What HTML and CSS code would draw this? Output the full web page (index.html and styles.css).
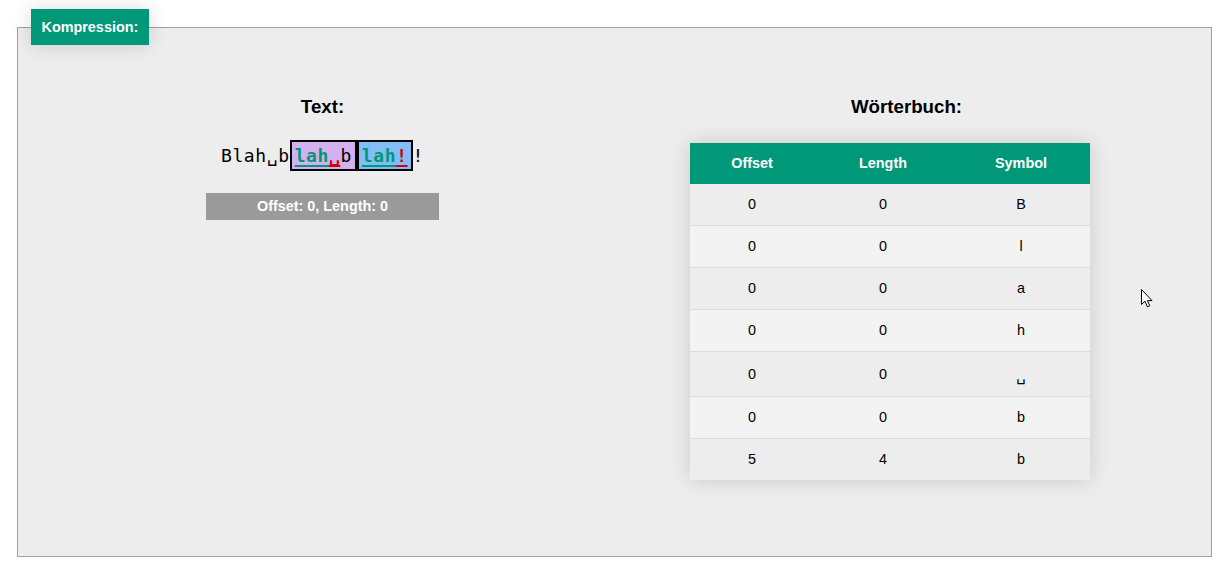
FILE: index.html
```html
<!DOCTYPE html>
<html lang="de">
<head>
<meta charset="utf-8">
<title>Kompression</title>
<link rel="stylesheet" href="styles.css">
</head>
<body>
<div class="page">
  <fieldset class="panel">
    <legend class="panel-title">Kompression:</legend>
    <div class="columns">
      <section class="col col-text">
        <h2 class="heading">Text:</h2>
        <div class="text-row"><span class="plain">Blah␣b</span><span class="win win-search"><span class="hit">lah</span><span class="miss">␣</span>b</span><span class="win win-look"><span class="hit">lah</span><span class="miss">!</span></span><span class="plain">!</span></div>
        <div class="status">Offset: 0, Length: 0</div>
      </section>
      <section class="col col-dict">
        <h2 class="heading">Wörterbuch:</h2>
        <table class="dict">
          <colgroup>
            <col class="c-off">
            <col class="c-len">
            <col class="c-sym">
          </colgroup>
          <thead>
            <tr><th>Offset</th><th>Length</th><th>Symbol</th></tr>
          </thead>
          <tbody>
            <tr><td>0</td><td>0</td><td>B</td></tr>
            <tr><td>0</td><td>0</td><td>l</td></tr>
            <tr><td>0</td><td>0</td><td>a</td></tr>
            <tr><td>0</td><td>0</td><td>h</td></tr>
            <tr><td>0</td><td>0</td><td><span class="sp">␣</span></td></tr>
            <tr><td>0</td><td>0</td><td>b</td></tr>
            <tr><td>5</td><td>4</td><td>b</td></tr>
          </tbody>
        </table>
      </section>
    </div>
  </fieldset>
  <svg class="cursor" width="13" height="20" viewBox="0 0 13 20" aria-hidden="true">
    <path d="M0.5 0.5 L0.5 15.5 L4 12.2 L6.4 17.8 L8.7 16.8 L6.4 11.6 L11 11.6 Z" fill="#fff" stroke="#000" stroke-width="1" stroke-linejoin="miter"/>
  </svg>
</div>
</body>
</html>
```

FILE: styles.css
```css
html, body {
  margin: 0;
  padding: 0;
  background: #ffffff;
}

body {
  font-family: "Liberation Sans", Arial, sans-serif;
  color: #000;
}

.page {
  position: relative;
  box-sizing: border-box;
  height: 566px;
  padding: 9px 15px 9px 17px;
}

.panel {
  box-sizing: border-box;
  height: 548px;
  margin: 0;
  padding: 0;
  min-width: 0;
  border: 1px solid #a0a0a0;
  background: #ededed;
}

.panel-title {
  margin-left: 13px;
  padding: 10px 10.5px;
  background: #009879;
  color: #ffffff;
  font-weight: bold;
  font-size: 14.4px;
  line-height: 16px;
  box-shadow: 0 0 20px rgba(0, 0, 0, 0.15);
}

.columns {
  display: grid;
  grid-template-columns: 609px 559px;
  padding-top: 51px;
}

.col {
  display: flex;
  flex-direction: column;
}

.col-text {
  align-items: center;
}

.heading {
  margin: 0;
  font-size: 18.72px;
  line-height: 22px;
  font-weight: bold;
  text-align: center;
}

.text-row {
  margin-top: 22px;
  font-family: "DejaVu Sans Mono", "Liberation Mono", monospace;
  font-size: 18px;
  line-height: 21px;
  letter-spacing: 0.6px;
  white-space: pre;
}

.win {
  display: inline-block;
  border: 2px solid #000;
  padding: 3px 3px;
}

.win-search {
  background: #d3b1ee;
}

.win-look {
  background: #82bdf5;
}

.hit {
  color: #009879;
  font-weight: bold;
  text-decoration: underline;
  text-decoration-thickness: 2px;
  text-underline-offset: 3px;
}

.miss {
  color: #d40000;
  font-weight: bold;
  text-decoration: underline;
  text-decoration-thickness: 2px;
  text-underline-offset: 3px;
}

.status {
  margin-top: 22px;
  padding: 5px 51px;
  background: #9a9a9a;
  color: #ffffff;
  font-weight: bold;
  font-size: 14.4px;
  line-height: 17px;
}

.dict {
  margin-top: 25px;
  margin-left: 63px;
  width: 400px;
  border-collapse: collapse;
  table-layout: fixed;
  font-size: 14.4px;
  box-shadow: 0 0 20px rgba(0, 0, 0, 0.15);
}

.c-off { width: 124px; }
.c-len { width: 138px; }
.c-sym { width: 138px; }

.dict th,
.dict td {
  padding: 12px 15px;
  line-height: 17px;
  text-align: center;
}

.dict thead tr {
  background: #009879;
  color: #ffffff;
}

.dict th {
  font-weight: bold;
}

.dict tbody tr {
  border-bottom: 1px solid #dddddd;
}

.dict tbody tr:nth-of-type(even) {
  background: #f3f3f3;
}

.dict tbody tr:last-of-type {
  border-bottom: none;
}

.sp {
  display: inline-block;
  height: 20px;
  line-height: 25px;
  vertical-align: top;
  font-family: "DejaVu Sans", sans-serif;
  font-size: 15px;
}

.cursor {
  position: absolute;
  left: 1141px;
  top: 289px;
}
```
